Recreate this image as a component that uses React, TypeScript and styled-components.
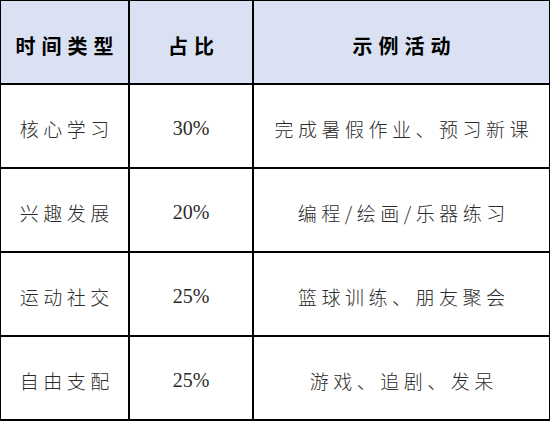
import React from 'react';
import styled, {createGlobalStyle} from "styled-components";

const GlobalStyle = createGlobalStyle`
    * {
        box-sizing: border-box;
    }
    body {
        margin: 0;
        background: #fff;
        font-family: "Liberation Serif", "Noto Sans CJK SC", serif;
    }
`

const Table = styled.div`
    width: 550px;
    height: 421px;
    display: grid;
    grid-template-columns: 129px 124px 297px;
    grid-template-rows: repeat(5, 84px);
    border-top: 1px solid #000;
    border-left: 1px solid #000;
`

const Cell = styled.div<{ $head?: boolean; $num?: boolean }>`
    display: flex;
    align-items: center;
    justify-content: center;
    border-right: 2px solid #000;
    border-bottom: 2px solid #000;
    background: ${props => props.$head ? "#d9e1f2" : "#fff"};
    color: ${props => props.$head ? "#000" : "#2b2b2b"};
    font-family: ${props => props.$num
            ? `"Liberation Serif", "Noto Sans CJK SC", serif`
            : `"Noto Sans CJK SC", sans-serif`};
    font-size: ${props => props.$head ? "20px" : props.$num ? "20px" : "19px"};
    font-weight: ${props => props.$head ? 700 : 300};
    letter-spacing: ${props => props.$num ? "0" : props.$head ? "6px" : "4.5px"};
    padding-left: ${props => props.$num ? "0" : props.$head ? "6px" : "4.5px"};
    padding-top: ${props => props.$head ? "6px" : "4px"};
    white-space: nowrap;
`

const rows = [
    ["核心学习", "30%", "完成暑假作业、预习新课"],
    ["兴趣发展", "20%", "编程/绘画/乐器练习"],
    ["运动社交", "25%", "篮球训练、朋友聚会"],
    ["自由支配", "25%", "游戏、追剧、发呆"],
]

export default function App() {
    return (
        <>
            <GlobalStyle/>
            <Table>
                <Cell $head>时间类型</Cell>
                <Cell $head>占比</Cell>
                <Cell $head>示例活动</Cell>
                {rows.map((row, index) => (
                    <React.Fragment key={index}>
                        <Cell>{row[0]}</Cell>
                        <Cell $num>{row[1]}</Cell>
                        <Cell>{row[2]}</Cell>
                    </React.Fragment>
                ))}
            </Table>
        </>
    );
}
